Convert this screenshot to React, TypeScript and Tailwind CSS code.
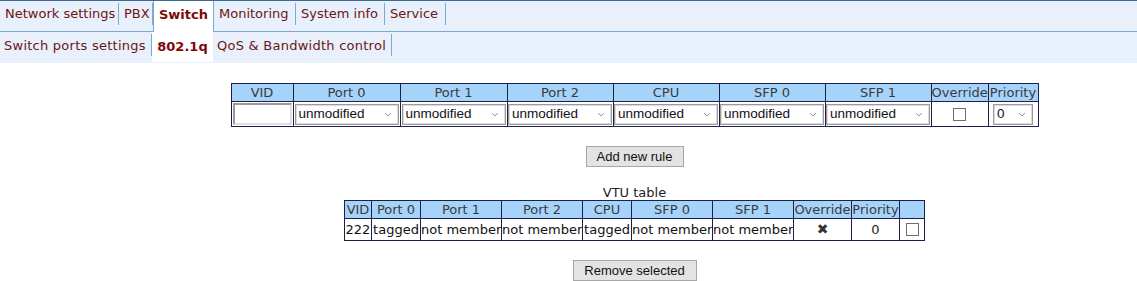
import React from "react";

const mainMenu = [
  { label: "Network settings", w: "w-[119px]" },
  { label: "PBX", w: "w-[34px]" },
  { label: "Switch", w: "w-[61px]" },
  { label: "Monitoring", w: "w-[82px]" },
  { label: "System info", w: "w-[89px]" },
  { label: "Service", w: "w-[61px]" },
];
const subMenu = [
  { label: "Switch ports settings", w: "w-[152px]" },
  { label: "802.1q", w: "w-[61px]" },
  { label: "QoS & Bandwidth control", w: "w-[179px]" },
];

const ruleCols = [
  { label: "VID", w: "w-[62px]" },
  { label: "Port 0", w: "w-[107px]" },
  { label: "Port 1", w: "w-[107px]" },
  { label: "Port 2", w: "w-[106px]" },
  { label: "CPU", w: "w-[106px]" },
  { label: "SFP 0", w: "w-[106px]" },
  { label: "SFP 1", w: "w-[106px]" },
  { label: "Override", w: "w-[57px]" },
  { label: "Priority", w: "w-[50px]" },
];

const vtuCols = [
  { label: "VID", w: "w-[27px]" },
  { label: "Port 0", w: "w-[49px]" },
  { label: "Port 1", w: "w-[81px]" },
  { label: "Port 2", w: "w-[81px]" },
  { label: "CPU", w: "w-[49px]" },
  { label: "SFP 0", w: "w-[81px]" },
  { label: "SFP 1", w: "w-[81px]" },
  { label: "Override", w: "w-[58px]" },
  { label: "Priority", w: "w-[48px]" },
  { label: "", w: "w-[25px]" },
];

const vtuRow = ["222", "tagged", "not member", "not member", "tagged", "not member", "not member"];

const Chevron = () => (
  <svg width="8" height="5" viewBox="0 0 8 5" className="shrink-0">
    <path d="M1 1l3 3 3-3" fill="none" stroke="#8f8f8f" strokeWidth="0.9" />
  </svg>
);

const FakeSelect = ({ value, w }: { value: string; w: string }) => (
  <div
    className={`${w} h-[21px] flex items-center justify-between border border-[#9a9a9a] bg-white pl-[3px] pr-[6px] shadow-[inset_0_0_0_1px_#dcdcdc] text-[13.5px] text-[#111]`}
    style={{ fontFamily: '"Liberation Sans", Arial, sans-serif' }}
  >
    <span>{value}</span>
    <Chevron />
  </div>
);

const Checkbox = () => <div className="w-[13px] h-[13px] border border-[#6f6f6f] bg-white mx-auto" />;

const th = "border border-[#1e1e48] bg-[#a6d3fa] font-normal text-[#3a3a3a] p-0 text-center leading-[17px]";
const td = "border border-[#1e1e48] p-0 text-center";

export default function App() {
  return (
    <div
      className="w-[1137px] h-[281px] bg-white overflow-hidden text-[13px]"
      style={{ fontFamily: '"DejaVu Sans", Verdana, sans-serif' }}
    >
      {/* main menu */}
      <div className="h-[32px] flex bg-[#e8f0fb] border-t border-[#3a6b96] border-b border-b-[#7fa7cf]">
        {mainMenu.map((item) =>
          item.label === "Switch" ? (
            <div
              key={item.label}
              className={`${item.w} h-[31px] -mb-px pt-[4px] bg-white border-x border-[#7fa7cf] font-bold text-[#7d0a0a] text-center whitespace-nowrap`}
            >
              {item.label}
            </div>
          ) : (
            <div
              key={item.label}
              className={`${item.w} h-[22px] mt-[2px] pl-[5px] pt-[2px] border-r border-[#7fa7cf] text-[#6e1414] leading-[18px] whitespace-nowrap`}
            >
              {item.label}
            </div>
          )
        )}
      </div>

      {/* sub menu */}
      <div className="h-[31px] flex bg-[#e8f0fb] tracking-[0.25px]">
        {subMenu.map((item) =>
          item.label === "802.1q" ? (
            <div
              key={item.label}
              className={`${item.w} h-[30px] pt-[5px] bg-white font-bold text-[#7d0a0a] tracking-normal text-center`}
            >
              {item.label}
            </div>
          ) : (
            <div
              key={item.label}
              className={`${item.w} h-[22px] mt-[2px] pl-[4px] pt-[3px] border-r border-[#7fa7cf] text-[#6e1414] leading-[18px] whitespace-nowrap`}
            >
              {item.label}
            </div>
          )
        )}
      </div>

      {/* content */}
      <div className="flex flex-col items-center pl-[132px] pt-[20px]">
        <table className="table-fixed border-collapse border border-[#1e1e48] w-[808px]">
          <colgroup>
            {ruleCols.map((c) => (
              <col key={c.label} className={c.w} />
            ))}
          </colgroup>
          <thead>
            <tr>
              {ruleCols.map((c) => (
                <th key={c.label} className={th}>
                  {c.label}
                </th>
              ))}
            </tr>
          </thead>
          <tbody>
            <tr className="h-[25px]">
              <td className={td}>
                <div className="w-[59px] h-[22px] mx-auto border-2 border-t-[#9a9a9a] border-l-[#9a9a9a] border-b-[#dedede] border-r-[#dedede] bg-white" />
              </td>
              {[0, 1, 2, 3, 4, 5].map((i) => (
                <td key={i} className={td}>
                  <div className="flex justify-center">
                    <FakeSelect value="unmodified" w="w-[104px]" />
                  </div>
                </td>
              ))}
              <td className={td}>
                <Checkbox />
              </td>
              <td className={td}>
                <div className="flex justify-center">
                  <FakeSelect value="0" w="w-[40px]" />
                </div>
              </td>
            </tr>
          </tbody>
        </table>

        <button
          className="mt-[19px] w-[98px] h-[21px] bg-[#e3e3e3] border border-[#a6a6a6] text-[13px] text-[#111] leading-[19px]"
          style={{ fontFamily: '"Liberation Sans", Arial, sans-serif' }}
        >
          Add new rule
        </button>

        <div className="mt-[18px] text-[13px] text-[#222] leading-[15px]">VTU table</div>

        <table className="table-fixed border-collapse border border-[#1e1e48] w-[580px]">
          <colgroup>
            {vtuCols.map((c, i) => (
              <col key={i} className={c.w} />
            ))}
          </colgroup>
          <thead>
            <tr>
              {vtuCols.map((c, i) => (
                <th key={i} className={`${th} leading-[17px]`}>
                  {c.label}
                </th>
              ))}
            </tr>
          </thead>
          <tbody>
            <tr className="h-[21px]">
              {vtuRow.map((v, i) => (
                <td key={i} className={`${td} text-[#111] whitespace-nowrap`}>
                  {v}
                </td>
              ))}
              <td className={`${td} text-[#333] text-[14px]`}>✖</td>
              <td className={`${td} text-[#222]`}>0</td>
              <td className={td}>
                <Checkbox />
              </td>
            </tr>
          </tbody>
        </table>

        <button
          className="mt-[19px] w-[124px] h-[21px] bg-[#e3e3e3] border border-[#a6a6a6] text-[13px] text-[#111] leading-[19px]"
          style={{ fontFamily: '"Liberation Sans", Arial, sans-serif' }}
        >
          Remove selected
        </button>
      </div>
    </div>
  );
}
